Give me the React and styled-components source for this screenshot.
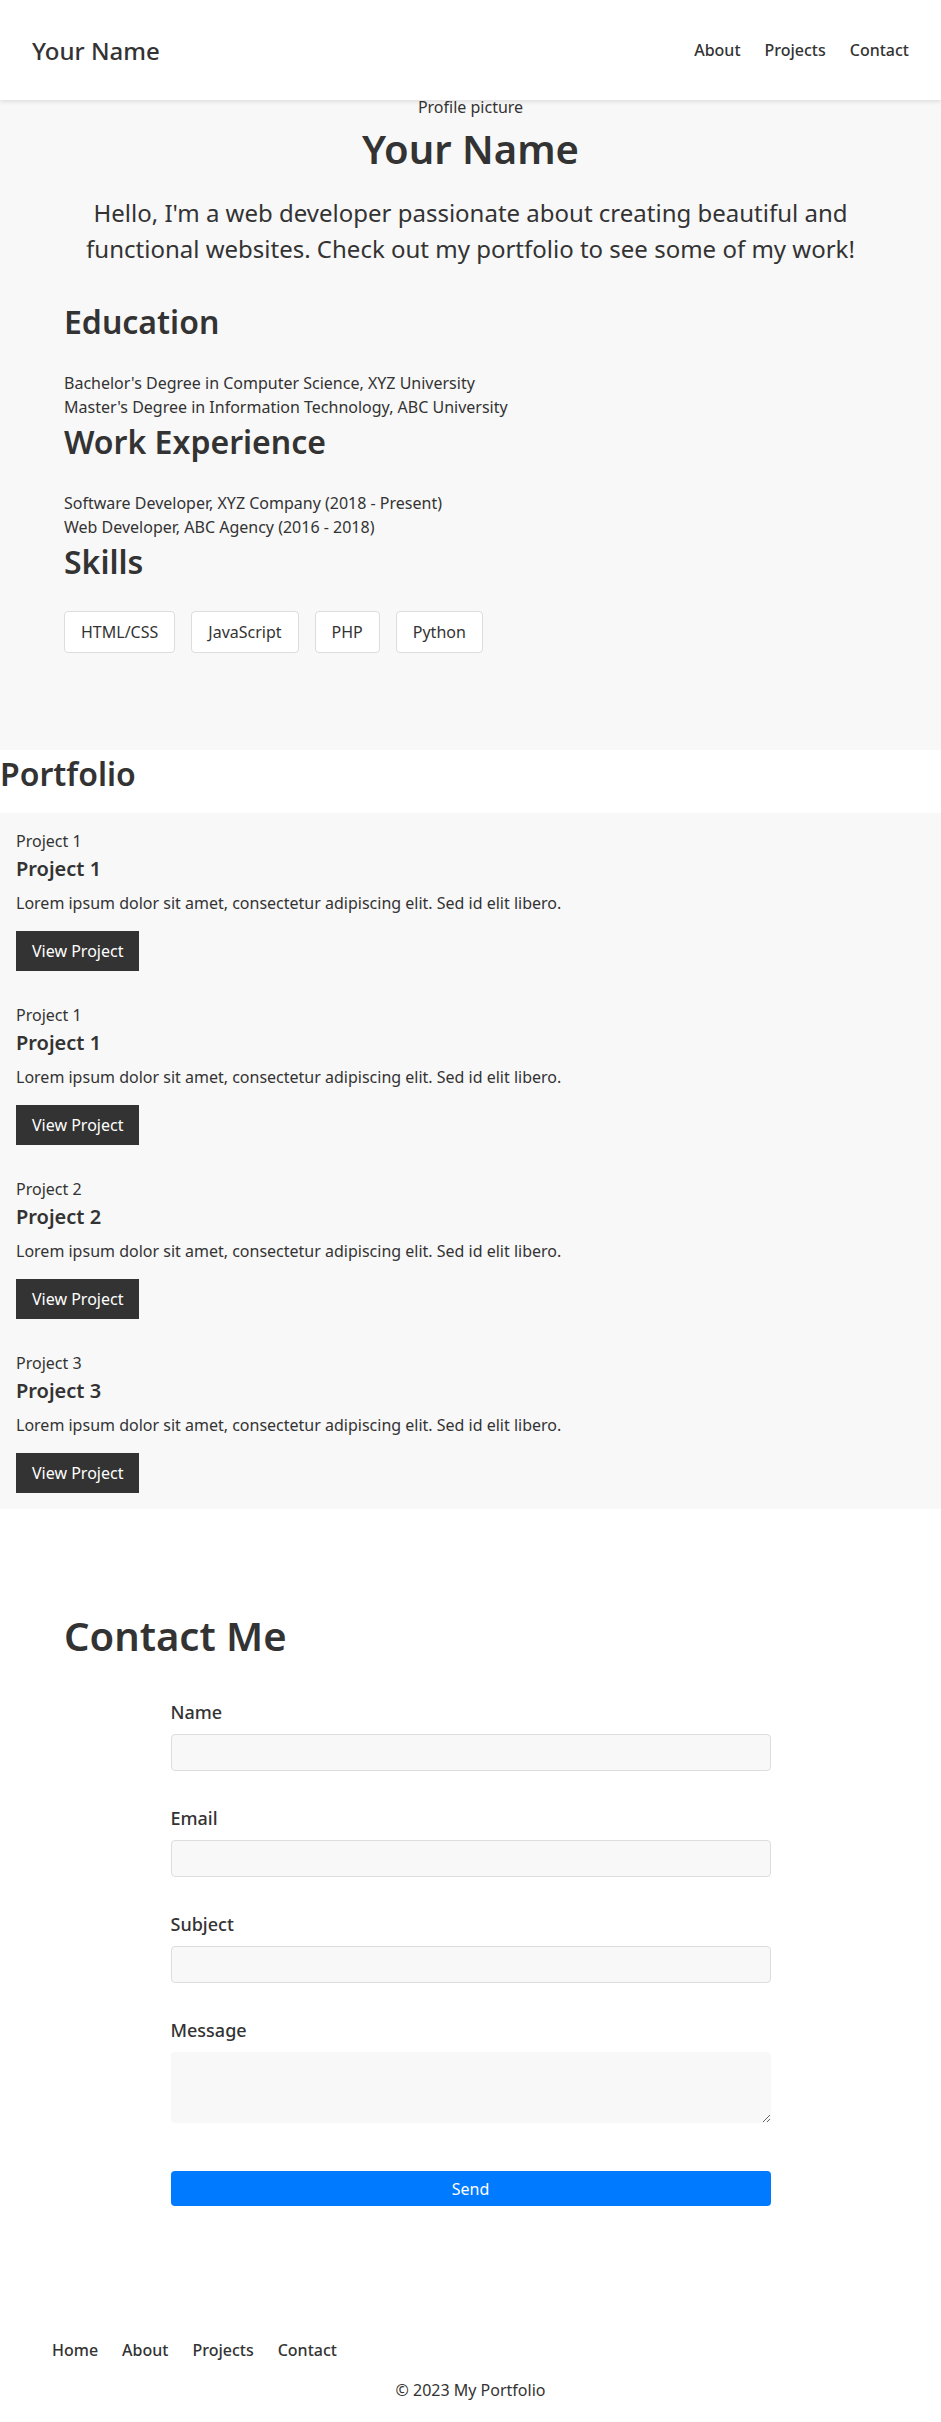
import React from 'react'
import styled, { createGlobalStyle } from 'styled-components'

const GlobalStyle = createGlobalStyle`
    body {
        margin: 0;
        font-family: "Noto Sans", "Open Sans", "Liberation Sans", sans-serif;
        color: #333;
        background: #fff;
    }
    * { box-sizing: border-box; }
`

const Header = styled.header`
    height: 100px;
    padding: 0 32px;
    display: flex;
    align-items: center;
    justify-content: space-between;
    background: #fff;
    box-shadow: 0 2px 4px rgba(0, 0, 0, 0.1);
    position: relative;
    z-index: 1;
`

const Logo = styled.div`
    font-size: 24px;
    font-weight: 500;
`

const NavList = styled.nav`
    display: flex;
    gap: 24px;
    padding-left: ${props => props.inset || 0}px;
`

const NavLink = styled.a`
    color: #333;
    text-decoration: none;
    font-size: 16px;
    font-weight: 500;
    line-height: 24px;
`

const Hero = styled.section`
    background: #f8f8f8;
    padding: 0 64px 97px;
`

const ImageAlt = styled.div`
    font-size: 16px;
    line-height: ${props => props.tight ? '14px' : '24px'};
    height: ${props => props.tight ? '20px' : 'auto'};
    text-align: ${props => props.center ? 'center' : 'left'};
`

const Title = styled.h1`
    font-size: 40px;
    font-weight: 600;
    line-height: 48px;
    margin: 5px 0 0;
    text-align: center;
`

const Intro = styled.p`
    font-size: 24px;
    line-height: 36px;
    margin: 22px 0 0;
    text-align: center;
`

const Block = styled.div`
    margin-top: ${props => props.first ? 36 : 4}px;
`

const SectionTitle = styled.h2`
    font-size: 32px;
    font-weight: 600;
    line-height: 38px;
    margin: 0 0 30px;
`

const Lines = styled.ul`
    list-style: none;
    margin: 0;
    padding: 0;
    font-size: 16px;
    line-height: 24px;
`

const Skills = styled.ul`
    list-style: none;
    margin: 0;
    padding: 0;
    display: flex;
    gap: 16px;
`

const Skill = styled.li`
    padding: 8px 16px;
    background: #fff;
    border: 1px solid #ddd;
    border-radius: 4px;
    font-size: 16px;
    line-height: 24px;
`

const Portfolio = styled.section`
    padding-top: 5px;
`

const PortfolioTitle = styled(SectionTitle)`
    margin: 0 0 20px;
`

const ProjectList = styled.div`
    background: #f8f8f8;
    padding: 16px;
    display: flex;
    flex-direction: column;
    gap: 32px;
`

const Project = styled.article``

const ProjectTitle = styled.h3`
    font-size: 20px;
    font-weight: 600;
    line-height: 24px;
    margin: 4px 0 10px;
`

const ProjectText = styled.p`
    font-size: 16px;
    line-height: 24px;
    margin: 0 0 16px;
`

const DarkButton = styled.button`
    background: #333;
    color: #fff;
    border: none;
    padding: 8px 16px;
    font-family: inherit;
    font-size: 16px;
    line-height: 24px;
`

const Contact = styled.section`
    padding: 103px 64px 0;
`

const ContactTitle = styled.h2`
    font-size: 40px;
    font-weight: 600;
    line-height: 48px;
    margin: 0 0 39px;
`

const Form = styled.form`
    max-width: 600px;
    margin: 0 auto;
    display: flex;
    flex-direction: column;
    gap: 34px;
`

const Field = styled.div`
    display: flex;
    flex-direction: column;
`

const Label = styled.label`
    font-size: 18px;
    font-weight: 500;
    line-height: 27px;
    margin-bottom: 8px;
`

const Input = styled.input`
    height: 37px;
    background: #f8f8f8;
    border: 1px solid #ddd;
    border-radius: 4px;
    padding: 0 8px;
    font-family: inherit;
    font-size: 16px;
`

const TextArea = styled.textarea`
    height: 71px;
    background: #f8f8f8;
    border: none;
    border-radius: 4px;
    padding: 8px;
    font-family: inherit;
    font-size: 16px;
`

const SendButton = styled.button`
    margin-top: 14px;
    height: 35px;
    background: #007bff;
    color: #fff;
    border: none;
    border-radius: 4px;
    font-family: inherit;
    font-size: 16px;
`

const Footer = styled.footer`
    padding: 132px 0 20px;
`

const Copyright = styled.p`
    margin: 16px 0 0;
    text-align: center;
    font-size: 16px;
    line-height: 24px;
`

const projects = [
    { image: "Project 1", title: "Project 1" },
    { image: "Project 1", title: "Project 1" },
    { image: "Project 2", title: "Project 2" },
    { image: "Project 3", title: "Project 3" }
]

const lorem = "Lorem ipsum dolor sit amet, consectetur adipiscing elit. Sed id elit libero."

const App = () => {
    return (
        <>
            <GlobalStyle />
            <Header>
                <Logo>Your Name</Logo>
                <NavList>
                    <NavLink href="#about">About</NavLink>
                    <NavLink href="#projects">Projects</NavLink>
                    <NavLink href="#contact">Contact</NavLink>
                </NavList>
            </Header>

            <Hero id="about">
                <ImageAlt tight center>Profile picture</ImageAlt>
                <Title>Your Name</Title>
                <Intro>
                    Hello, I'm a web developer passionate about creating beautiful and functional websites. Check out my portfolio to see some of my work!
                </Intro>
                <Block first>
                    <SectionTitle>Education</SectionTitle>
                    <Lines>
                        <li>Bachelor's Degree in Computer Science, XYZ University</li>
                        <li>Master's Degree in Information Technology, ABC University</li>
                    </Lines>
                </Block>
                <Block>
                    <SectionTitle>Work Experience</SectionTitle>
                    <Lines>
                        <li>Software Developer, XYZ Company (2018 - Present)</li>
                        <li>Web Developer, ABC Agency (2016 - 2018)</li>
                    </Lines>
                </Block>
                <Block>
                    <SectionTitle>Skills</SectionTitle>
                    <Skills>
                        {['HTML/CSS', 'JavaScript', 'PHP', 'Python'].map(skill => (
                            <Skill key={skill}>{skill}</Skill>
                        ))}
                    </Skills>
                </Block>
            </Hero>

            <Portfolio id="projects">
                <PortfolioTitle>Portfolio</PortfolioTitle>
                <ProjectList>
                    {projects.map((project, index) => (
                        <Project key={index}>
                            <ImageAlt>{project.image}</ImageAlt>
                            <ProjectTitle>{project.title}</ProjectTitle>
                            <ProjectText>{lorem}</ProjectText>
                            <DarkButton>View Project</DarkButton>
                        </Project>
                    ))}
                </ProjectList>
            </Portfolio>

            <Contact id="contact">
                <ContactTitle>Contact Me</ContactTitle>
                <Form onSubmit={e => e.preventDefault()}>
                    <Field>
                        <Label htmlFor="name">Name</Label>
                        <Input id="name" type="text" />
                    </Field>
                    <Field>
                        <Label htmlFor="email">Email</Label>
                        <Input id="email" type="email" />
                    </Field>
                    <Field>
                        <Label htmlFor="subject">Subject</Label>
                        <Input id="subject" type="text" />
                    </Field>
                    <Field>
                        <Label htmlFor="message">Message</Label>
                        <TextArea id="message" />
                    </Field>
                    <SendButton type="submit">Send</SendButton>
                </Form>
            </Contact>

            <Footer>
                <NavList inset={52}>
                    <NavLink href="#">Home</NavLink>
                    <NavLink href="#about">About</NavLink>
                    <NavLink href="#projects">Projects</NavLink>
                    <NavLink href="#contact">Contact</NavLink>
                </NavList>
                <Copyright>© 2023 My Portfolio</Copyright>
            </Footer>
        </>
    )
}

export default App
